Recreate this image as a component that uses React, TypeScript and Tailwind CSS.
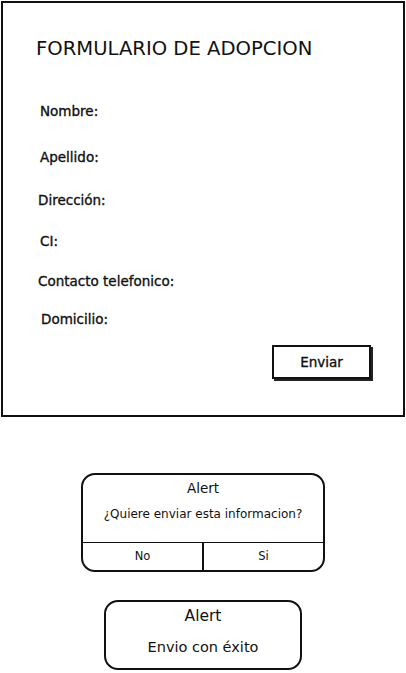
import React from 'react'

const fields = [
  { label: 'Nombre:', cls: 'mt-[42px] ml-[4px]' },
  { label: 'Apellido:', cls: 'mt-[30px] ml-[4px]' },
  { label: 'Dirección:', cls: 'mt-[27px] ml-[2px]' },
  { label: 'CI:', cls: 'mt-[25px] ml-[4px]' },
  { label: 'Contacto telefonico:', cls: 'mt-[24px] ml-[2px]' },
  { label: 'Domicilio:', cls: 'mt-[22px] ml-[5px]' },
]

export default function App() {
  return (
    <div className="w-[406px] h-[673px] bg-white text-[#111] font-['DejaVu_Sans','Liberation_Sans',sans-serif] overflow-hidden">
      {/* formulario */}
      <div className="ml-[1px] mt-[1px] w-[404px] h-[416px] border-2 border-[#111] pl-[33px] pt-[34px] flex flex-col">
        <h1 className="text-[19.6px] leading-[24px]">FORMULARIO DE ADOPCION</h1>
        {fields.map((f) => (
          <div key={f.label} className={`text-[13.5px] leading-[16px] [-webkit-text-stroke:0.35px_#111] ${f.cls}`}>
            {f.label}
          </div>
        ))}
        <div className="mt-[18px] flex justify-end pr-[32px]">
          <button className="w-[99px] h-[34px] border-2 border-[#111] bg-white text-[13.5px] [-webkit-text-stroke:0.35px_#111] shadow-[2px_2px_0_#222]">
            Enviar
          </button>
        </div>
      </div>

      {/* alerta confirmacion */}
      <div className="mx-auto mt-[56px] w-[244px] h-[99px] border-2 border-[#111] rounded-[14px] flex flex-col overflow-hidden">
        <div className="text-center text-[13.5px] leading-[18px] mt-[4px]">Alert</div>
        <div className="text-center text-[12px] leading-[16px] mt-[9px]">¿Quiere enviar esta informacion?</div>
        <div className="mt-auto h-[28px] border-t border-[#111] flex text-[11.5px]">
          <div className="flex-1 flex items-center justify-center border-r-2 border-[#111]">No</div>
          <div className="flex-1 flex items-center justify-center">Si</div>
        </div>
      </div>

      {/* alerta exito */}
      <div className="mx-auto mt-[28px] w-[198px] h-[70px] border-2 border-[#111] rounded-[14px] flex flex-col items-center">
        <div className="text-[15.5px] leading-[20px] mt-[4px]">Alert</div>
        <div className="text-[14.5px] leading-[20px] mt-[11px]">Envio con éxito</div>
      </div>
    </div>
  )
}
